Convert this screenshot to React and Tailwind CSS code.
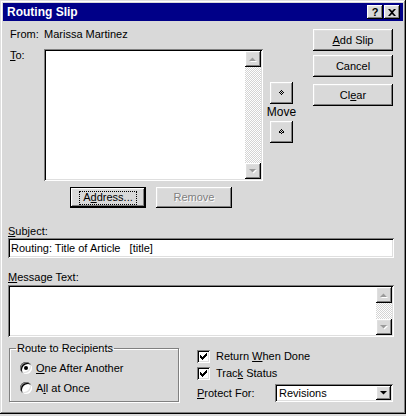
import React from 'react';

const raised =
  'shadow-[inset_-1px_-1px_0_#000,inset_1px_1px_0_#fff,inset_-2px_-2px_0_#808080,inset_2px_2px_0_#dfdfdf]';
const sunken =
  'shadow-[inset_1px_1px_0_#808080,inset_-1px_-1px_0_#fff,inset_2px_2px_0_#000,inset_-2px_-2px_0_#dfdfdf]';

function Arrow({ dir, disabled }) {
  const pts = dir === 'up' ? '0,4 7,4 3.5,0.5' : '0,0 7,0 3.5,3.5';
  return (
    <svg width="8" height="5" viewBox="0 0 8 5">
      {disabled && <polygon points={pts} fill="#fff" transform="translate(1,1)" />}
      <polygon points={pts} fill={disabled ? '#9a9a9a' : '#000'} />
    </svg>
  );
}

function Scrollbar() {
  return (
    <div className="w-[16px] h-full flex flex-col">
      <div className={`h-[16px] flex items-center justify-center bg-[#d9d9d9] ${raised}`}>
        <Arrow dir="up" disabled />
      </div>
      <div className="flex-1 bg-[image:repeating-conic-gradient(#d4d4d4_0_25%,#fff_0_50%)] bg-[length:2px_2px]" />
      <div className={`h-[16px] flex items-center justify-center bg-[#d9d9d9] ${raised}`}>
        <Arrow dir="down" disabled />
      </div>
    </div>
  );
}

function Button({ children, className = '', disabled }) {
  return (
    <div
      className={`flex items-center justify-center bg-[#d9d9d9] ${raised} ${
        disabled ? 'text-[#808080] [text-shadow:1px_1px_0_#fff]' : ''
      } ${className}`}
    >
      {children}
    </div>
  );
}

function Diamond({ down }) {
  // tiny dotted arrow glyphs used on the Move buttons
  const cells = down
    ? [[3, 0], [2, 1], [4, 1], [1, 2], [3, 2], [5, 2], [2, 3], [4, 3], [3, 4], [1, 3], [5, 3]]
    : [[3, 0], [2, 1], [4, 1], [1, 2], [3, 2], [5, 2], [2, 3], [4, 3], [3, 4]];
  return (
    <svg width="7" height="6" viewBox="0 0 7 6">
      {cells.map(([x, y]) => (
        <rect key={`${x}-${y}`} x={x} y={y} width="1" height="1" fill="#000" />
      ))}
    </svg>
  );
}

function Check() {
  return (
    <div className={`w-[13px] h-[13px] bg-white ${sunken} flex items-center justify-center`}>
      <svg width="7" height="7" viewBox="0 0 7 7">
        <path d="M0 2h1v1h1v1h1V3h1V2h1V1h1V0h1v3H6v1H5v1H4v1H3v1H2V6H1V5H0z" fill="#000" />
      </svg>
    </div>
  );
}

function Radio({ on }) {
  return (
    <div className={`w-[12px] h-[12px] rounded-full bg-white ${sunken} flex items-center justify-center`}>
      {on && <div className="w-[4px] h-[4px] rounded-full bg-black" />}
    </div>
  );
}

export default function App() {
  return (
    <div className="w-[406px] h-[416px] bg-[#d9d9d9] font-['Liberation_Sans',Arial,sans-serif] text-[11px] leading-[13px] text-black">
      <div className="w-[406px] h-[414px] flex flex-col shadow-[inset_-1px_-1px_0_#000,inset_1px_1px_0_#dfdfdf,inset_-2px_-2px_0_#808080,inset_2px_2px_0_#fff]">
        {/* title bar */}
        <div className="mx-[3px] mt-[3px] h-[18px] bg-[#000088] flex items-center pl-[4px] pr-[3px]">
          <span className="text-white font-bold text-[12px] leading-[14px]">Routing Slip</span>
          <div className="ml-auto flex gap-[1px]">
            <div className={`w-[16px] h-[14px] bg-[#d9d9d9] ${raised} flex items-center justify-center font-bold text-[11px] leading-[11px]`}>
              ?
            </div>
            <div className={`w-[16px] h-[14px] bg-[#d9d9d9] ${raised} flex items-center justify-center`}>
              <svg width="8" height="7" viewBox="0 0 8 7">
                <path d="M0 0h2l2 2 2-2h2L5 3.5 8 7H6L4 5 2 7H0l3-3.5z" fill="#000" />
              </svg>
            </div>
          </div>
        </div>

        <div className="pl-[8px] pr-[12px] flex flex-col">
          {/* top section */}
          <div className="flex">
            <div className="w-[305px] flex flex-col">
              <div className="mt-[7px] h-[13px] flex">
                <span className="w-[36px] pl-[2px]">From:</span>
                <span>Marissa Martinez</span>
              </div>
              <div className="mt-[8px] flex">
                <span className="w-[36px] pl-[2px]">
                  <u>T</u>o:
                </span>
                <div className={`w-[219px] h-[132px] bg-white ${sunken} p-[2px] flex justify-end`}>
                  <Scrollbar />
                </div>
                <div className="ml-[7px] pt-[33px] w-[23px] flex flex-col items-center">
                  <Button className="w-[23px] h-[22px]">
                    <Diamond />
                  </Button>
                  <span className="mt-[2px] h-[13px] text-[12px]">Move</span>
                  <Button className="mt-[2px] w-[23px] h-[22px]">
                    <Diamond down />
                  </Button>
                </div>
              </div>
              <div className="mt-[6px] pl-[62px] flex">
                <div className="w-[76px] h-[21px] border border-black">
                  <Button className="w-full h-full">
                    <span className="border border-dotted border-black px-[3px] leading-[11px] pb-[1px]">
                      A<u>d</u>dress...
                    </span>
                  </Button>
                </div>
                <Button disabled className="ml-[10px] w-[76px] h-[21px]">
                  Remove
                </Button>
              </div>
            </div>
            <div className="flex flex-col">
              <Button className="mt-[8px] w-[80px] h-[22px]">
                <span>
                  <u>A</u>dd Slip
                </span>
              </Button>
              <Button className="mt-[4px] w-[80px] h-[22px]">Cancel</Button>
              <Button className="mt-[7px] w-[80px] h-[22px]">
                <span>
                  Cl<u>e</u>ar
                </span>
              </Button>
            </div>
          </div>

          {/* subject */}
          <div className="mt-[17px] h-[13px]">
            <u>S</u>ubject:
          </div>
          <div className={`w-[386px] h-[20px] bg-white ${sunken} flex items-center pl-[3px]`}>
            Routing: Title of Article&nbsp;&nbsp;&nbsp;[title]
          </div>

          {/* message */}
          <div className="mt-[13px] h-[13px]">
            <u>M</u>essage Text:
          </div>
          <div className={`mt-[1px] w-[386px] h-[52px] bg-white ${sunken} p-[2px] flex justify-end`}>
            <Scrollbar />
          </div>

          {/* bottom */}
          <div className="flex">
            <fieldset className="mt-[5px] ml-[1px] w-[170px] h-[60px] border border-[#808080] shadow-[1px_1px_0_#fff,inset_1px_1px_0_#fff] pl-[10px]">
              <legend className="-ml-[4px] px-[1px] h-[13px]">Route to Recipients</legend>
              <div className="mt-[3px] h-[20px] flex items-center">
                <Radio on />
                <span className="ml-[4px]">
                  <u>O</u>ne After Another
                </span>
              </div>
              <div className="h-[20px] flex items-center">
                <Radio />
                <span className="ml-[4px]">
                  A<u>l</u>l at Once
                </span>
              </div>
            </fieldset>
            <div className="ml-[18px] mt-[11px] flex flex-col">
              <div className="h-[17px] flex items-center">
                <Check />
                <span className="ml-[6px]">
                  Return <u>W</u>hen Done
                </span>
              </div>
              <div className="h-[17px] flex items-center">
                <Check />
                <span className="ml-[6px]">
                  Trac<u>k</u> Status
                </span>
              </div>
              <div className="mt-[2px] h-[18px] flex items-center">
                <span className="w-[78px]">
                  <u>P</u>rotect For:
                </span>
                <div className={`w-[118px] h-[18px] bg-white ${sunken} p-[2px] flex items-center`}>
                  <span className="pl-[2px] flex-1">Revisions</span>
                  <div className={`w-[15px] h-full bg-[#d9d9d9] ${raised} flex items-center justify-center`}>
                    <Arrow dir="down" />
                  </div>
                </div>
              </div>
            </div>
          </div>
        </div>
      </div>
    </div>
  );
}
